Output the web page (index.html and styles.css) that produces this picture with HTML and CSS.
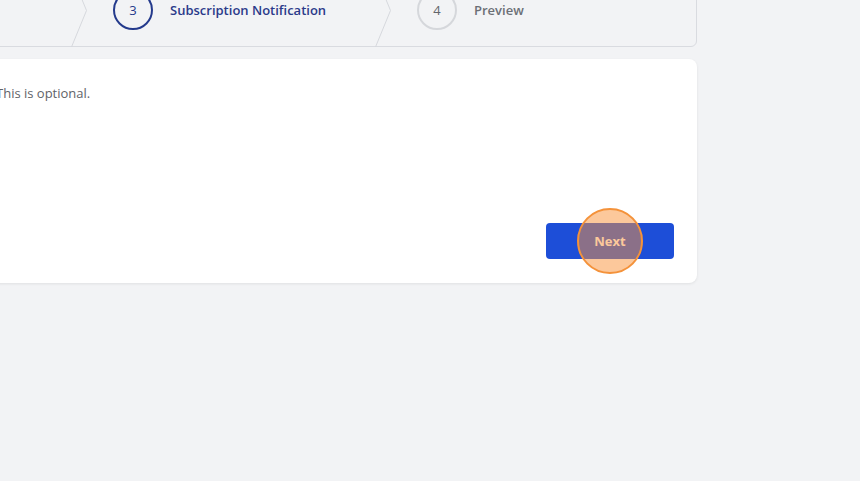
FILE: index.html
```html
<!DOCTYPE html>
<html lang="en">
<head>
<meta charset="utf-8">
<title>Subscription Notification</title>
<link rel="stylesheet" href="styles.css">
</head>
<body>
<div class="wrap">
  <div class="stepper">
    <div class="step step-lead">
      <svg class="chev" viewBox="0 0 16 73" preserveAspectRatio="none"><polyline points="0.5,0 15.5,36.5 0.5,73" /></svg>
    </div>
    <div class="step step-mid active">
      <span class="num">3</span>
      <span class="label">Subscription Notification</span>
      <svg class="chev" viewBox="0 0 16 73" preserveAspectRatio="none"><polyline points="0.5,0 15.5,36.5 0.5,73" /></svg>
    </div>
    <div class="step step-last">
      <span class="num">4</span>
      <span class="label">Preview</span>
    </div>
  </div>
  <div class="card">
    <p class="hint">This is optional.</p>
    <div class="actions">
      <button class="btn">Next<span class="spot"></span></button>
    </div>
  </div>
</div>
</body>
</html>
```
FILE: styles.css
```css
html, body {
  margin: 0;
  padding: 0;
  background: #f2f3f5;
  overflow: hidden;
}
body {
  font-family: "Open Sans", "Noto Sans", sans-serif;
  width: 860px;
  height: 481px;
}
.wrap {
  width: 723px;
  margin-left: -26px;
  margin-top: -26px;
}
.stepper {
  height: 73px;
  box-sizing: border-box;
  border: 1px solid #d9dbe0;
  border-radius: 6px;
  display: flex;
  background: #f2f3f5;
}
.step {
  position: relative;
  display: flex;
  align-items: center;
  box-sizing: border-box;
  padding-left: 26px;
  padding-bottom: 2px;
}
.step-lead { width: 112px; padding-left: 0; }
.step-mid { width: 304px; }
.step-last { flex: 1; }
.chev {
  position: absolute;
  right: 0;
  top: -1px;
  width: 16px;
  height: 73px;
  fill: none;
  stroke: #d6d8dd;
  stroke-width: 1;
}
.num {
  width: 40px;
  height: 40px;
  box-sizing: border-box;
  border-radius: 50%;
  border: 2px solid #d5d7db;
  display: flex;
  align-items: center;
  justify-content: center;
  font-size: 13px;
  color: #62666c;
  flex: none;
}
.label {
  margin-left: 17px;
  font-size: 13px;
  font-weight: 600;
  color: #6b6f76;
}
.active .num {
  border-color: #243a8c;
  color: #243a8c;
}
.active .label { color: #2b3a8a; }
.card {
  margin-top: 12px;
  height: 224px;
  box-sizing: border-box;
  background: #ffffff;
  border-radius: 8px;
  box-shadow: 0 1px 3px rgba(0, 0, 0, 0.08);
  padding: 24px 23px 24px 22px;
  display: flex;
  flex-direction: column;
}
.hint {
  margin: 0;
  font-size: 13px;
  line-height: 20px;
  color: #5f6368;
}
.actions {
  margin-top: auto;
  display: flex;
  justify-content: flex-end;
}
.btn {
  position: relative;
  width: 128px;
  height: 36px;
  border: none;
  border-radius: 4px;
  background: #1d4ed8;
  color: #ffffff;
  font-family: inherit;
  font-size: 13px;
  font-weight: 700;
  padding: 0;
}
.spot {
  position: absolute;
  left: 50%;
  top: 50%;
  width: 66px;
  height: 66px;
  box-sizing: border-box;
  margin-left: -33px;
  margin-top: -33px;
  border-radius: 50%;
  background: rgba(249, 145, 55, 0.5);
  border: 2px solid #f4923a;
}
```
